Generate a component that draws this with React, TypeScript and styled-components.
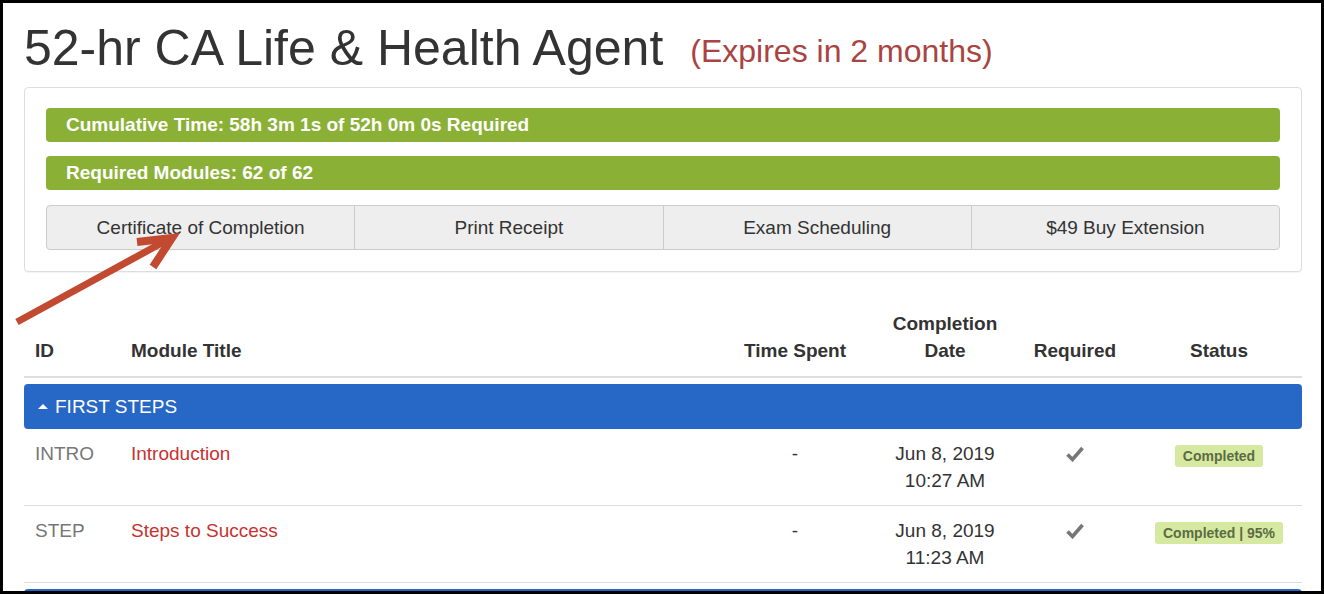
import React from 'react'
import styled, { createGlobalStyle } from 'styled-components'

const GlobalStyle = createGlobalStyle`
  html, body {
    margin: 0;
    padding: 0;
    background: #fff;
  }
  body {
    font-family: "Liberation Sans", Arial, sans-serif;
    color: #333;
  }
`

const Frame = styled.div`
  position: relative;
  box-sizing: border-box;
  width: 1324px;
  height: 594px;
  border: 3px solid #000;
  padding: 18px 19px 0 21px;
  overflow: hidden;
  background: #fff;
`

const Title = styled.h1`
  margin: 0 0 9px;
  font-size: 50px;
  line-height: 54px;
  font-weight: 400;
  color: #333;
  white-space: nowrap;
`

const Expires = styled.small`
  margin-left: 27px;
  font-size: 32px;
  color: #a94442;
  vertical-align: 3px;
`

const Panel = styled.div`
  border: 1px solid #ddd;
  border-radius: 4px;
  box-shadow: 0 1px 1px rgba(0, 0, 0, 0.05);
  padding: 20px 21px 21px;
`

const ProgressBar = styled.div<{ $last?: boolean }>`
  height: 34px;
  line-height: 34px;
  margin-bottom: ${p => (p.$last ? 15 : 14)}px;
  padding-left: 20px;
  border-radius: 4px;
  background: #8ab135;
  color: #fff;
  font-size: 19px;
  font-weight: 700;
`

const ButtonGroup = styled.div`
  display: flex;
  height: 45px;
`

const ActionButton = styled.button`
  flex: 1;
  margin: 0;
  border: 1px solid #ccc;
  background: #eee;
  color: #333;
  font-family: "Liberation Sans", Arial, sans-serif;
  font-size: 19px;
  cursor: pointer;

  & + & {
    margin-left: -1px;
  }
  &:first-child {
    border-radius: 4px 0 0 4px;
  }
  &:last-child {
    border-radius: 0 4px 4px 0;
  }
`

const Table = styled.div`
  margin-top: 30px;
  font-size: 19px;
  line-height: 27px;
`

const columns = '96px 1fr 162px 138px 122px 166px'

const HeadRow = styled.div`
  display: grid;
  grid-template-columns: ${columns};
  align-items: end;
  border-bottom: 2px solid #ddd;
`

const HeadCell = styled.div<{ $center?: boolean }>`
  padding: 8px 11px 12px;
  font-weight: 700;
  text-align: ${p => (p.$center ? 'center' : 'left')};
`

const GroupRow = styled.div`
  display: flex;
  align-items: center;
  height: 45px;
  margin-top: 6px;
  padding-left: 14px;
  border-radius: 4px;
  background: #2767c6;
  color: #fff;
  font-size: 19px;
`

const Caret = styled.span`
  width: 0;
  height: 0;
  margin-right: 7px;
  border-left: 5px solid transparent;
  border-right: 5px solid transparent;
  border-bottom: 5px solid #fff;
`

const Row = styled.div`
  display: grid;
  grid-template-columns: ${columns};
  border-bottom: 1px solid #ddd;
`

const Cell = styled.div<{ $center?: boolean; $tone?: 'muted' | 'link' }>`
  padding: 11px 11px;
  text-align: ${p => (p.$center ? 'center' : 'left')};
  color: ${p => (p.$tone === 'muted' ? '#777' : p.$tone === 'link' ? '#c7322f' : '#333')};
`

const BadgeCell = styled.div`
  display: flex;
  justify-content: center;
  align-items: flex-start;
  padding: 16px 11px 11px;
`

const Badge = styled.span`
  display: inline-block;
  padding: 3px 8px;
  line-height: 16px;
  border-radius: 3px;
  background: #d5eaa0;
  color: #5d6a45;
  font-size: 14px;
  font-weight: 700;
`

const CheckIcon = styled.svg`
  display: block;
  margin: 6px auto 0;
`

const Arrow = styled.svg`
  position: absolute;
  left: 0;
  top: 0;
  pointer-events: none;
`

interface Module {
  id: string
  title: string
  time: string
  date: string
  clock: string
  status: string
}

const modules: Module[] = [
  { id: 'INTRO', title: 'Introduction', time: '-', date: 'Jun 8, 2019', clock: '10:27 AM', status: 'Completed' },
  { id: 'STEP', title: 'Steps to Success', time: '-', date: 'Jun 8, 2019', clock: '11:23 AM', status: 'Completed | 95%' }
]

const Check = () => (
  <CheckIcon width="18" height="16" viewBox="0 0 18 16">
    <path d="M1.5 8.5 L6.5 13.5 L16.5 2" fill="none" stroke="#777" strokeWidth="3.6" strokeLinejoin="miter" />
  </CheckIcon>
)

export default function App() {
  return (
    <>
      <GlobalStyle />
      <Frame>
        <Title>
          52-hr CA Life &amp; Health Agent
          <Expires>(Expires in 2 months)</Expires>
        </Title>

        <Panel>
          <ProgressBar>Cumulative Time: 58h 3m 1s of 52h 0m 0s Required</ProgressBar>
          <ProgressBar $last>Required Modules: 62 of 62</ProgressBar>
          <ButtonGroup>
            <ActionButton>Certificate of Completion</ActionButton>
            <ActionButton>Print Receipt</ActionButton>
            <ActionButton>Exam Scheduling</ActionButton>
            <ActionButton>$49 Buy Extension</ActionButton>
          </ButtonGroup>
        </Panel>

        <Table>
          <HeadRow>
            <HeadCell>ID</HeadCell>
            <HeadCell>Module Title</HeadCell>
            <HeadCell $center>Time Spent</HeadCell>
            <HeadCell $center>Completion Date</HeadCell>
            <HeadCell $center>Required</HeadCell>
            <HeadCell $center>Status</HeadCell>
          </HeadRow>

          <GroupRow>
            <Caret />
            FIRST STEPS
          </GroupRow>

          {modules.map(m => (
            <Row key={m.id}>
              <Cell $tone="muted">{m.id}</Cell>
              <Cell $tone="link">{m.title}</Cell>
              <Cell $center>{m.time}</Cell>
              <Cell $center>
                {m.date}
                <br />
                {m.clock}
              </Cell>
              <Cell $center>
                <Check />
              </Cell>
              <BadgeCell>
                <Badge>{m.status}</Badge>
              </BadgeCell>
            </Row>
          ))}

          <GroupRow />
        </Table>

        <Arrow width="200" height="340" viewBox="0 0 200 340">
          <line x1="14" y1="319" x2="166" y2="236" stroke="#c14a30" strokeWidth="7" />
          <polyline points="134,239 169,235 150,264" fill="none" stroke="#c14a30" strokeWidth="8" strokeLinejoin="miter" />
        </Arrow>
      </Frame>
    </>
  )
}
